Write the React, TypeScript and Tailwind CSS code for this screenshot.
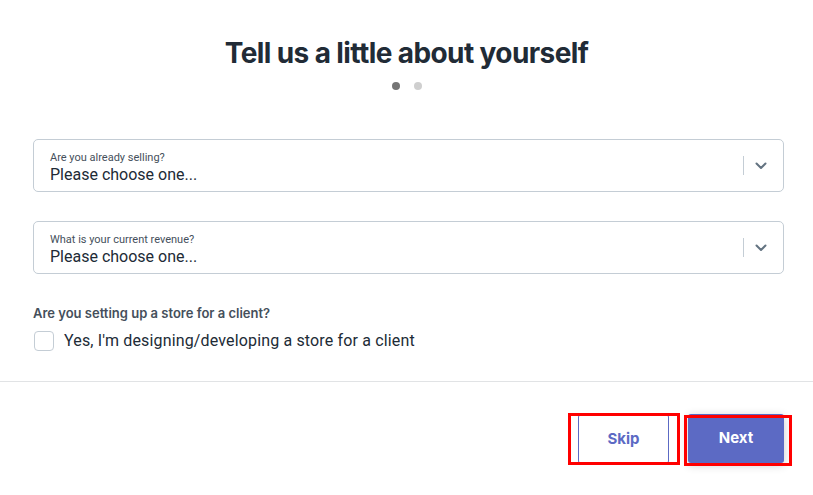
import { useState } from 'react';

const fieldFont = { fontFamily: 'Roboto, "Liberation Sans", sans-serif' };

type SelectFieldProps = {
  label: string;
  placeholder: string;
};

const SelectField = ({ label, placeholder }: SelectFieldProps) => (
  <div className="flex h-[53px] w-full items-center rounded-[5px] border border-[#c4cdd5] bg-white pl-4 pr-4">
    <div className="flex flex-1 flex-col pt-[4px]">
      <span className="text-[11px] leading-[14px] text-[#454f5b]" style={fieldFont}>
        {label}
      </span>
      <span className="text-[16px] leading-[20px] text-[#212b36]" style={fieldFont}>
        {placeholder}
      </span>
    </div>
    <div className="h-[19px] w-px bg-[#c4cdd5]" />
    <div className="flex w-[23px] justify-end">
      <svg width="12" height="8" viewBox="0 0 12 8" fill="none">
        <path d="M1.5 1.5L6 6l4.5-4.5" stroke="#637381" strokeWidth="2" strokeLinecap="round" strokeLinejoin="round" />
      </svg>
    </div>
  </div>
);

export default function App() {
  const [forClient, setForClient] = useState(false);

  return (
    <div className="flex h-[495px] w-[813px] flex-col bg-white" style={{ fontFamily: 'Inter, "Noto Sans", sans-serif' }}>
      {/* Header */}
      <div className="flex flex-col items-center pt-[35px]">
        <h1 className="text-[28px] font-bold leading-[36px] tracking-[-0.6px] text-[#212b36]">
          Tell us a little about yourself
        </h1>
        <div className="mt-[11px] flex gap-[14px]">
          <span className="h-[8px] w-[8px] rounded-full bg-[#757575]" />
          <span className="h-[8px] w-[8px] rounded-full bg-[#cfcfcf]" />
        </div>
      </div>

      {/* Form */}
      <div className="mt-[49px] flex flex-col pl-[33px] pr-[29px]">
        <SelectField label="Are you already selling?" placeholder="Please choose one..." />
        <div className="mt-[29px]">
          <SelectField label="What is your current revenue?" placeholder="Please choose one..." />
        </div>

        <p className="mt-[31px] text-[13px] font-semibold leading-[16px] text-[#454f5b]">
          Are you setting up a store for a client?
        </p>
        <label className="mt-[10px] flex cursor-pointer items-center gap-[10px]">
          <input
            type="checkbox"
            checked={forClient}
            onChange={() => setForClient(!forClient)}
            className="ml-[1px] h-[20px] w-[20px] appearance-none rounded-[4px] border border-[#c4cdd5] bg-white"
          />
          <span className="text-[16px] leading-[20px] tracking-[0.15px] text-[#212b36]" style={fieldFont}>
            Yes, I'm designing/developing a store for a client
          </span>
        </label>
      </div>

      <div className="mt-[30px] h-px w-full bg-[#e1e3e5]" />

      {/* Footer */}
      <div className="flex justify-end gap-[19px] pr-[29px] pt-[32px]">
        <div className="relative">
          <button className="h-[50px] w-[91px] rounded-[3px] border border-[#5c6ac4] bg-white text-[15px] font-bold text-[#5c6ac4]">
            Skip
          </button>
          <div className="pointer-events-none absolute -left-[10px] -right-[11px] -top-[1px] -bottom-[1px] border-[3px] border-[#ff0000]" />
        </div>
        <div className="relative">
          <button className="h-[49px] w-[96px] rounded-[3px] bg-[#5c6ac4] text-[15px] font-bold text-white shadow-[0_2px_10px_rgba(0,0,0,0.2)]">
            Next
          </button>
          <div className="pointer-events-none absolute -left-[4px] -right-[8px] top-[1px] -bottom-[2px] border-[3px] border-[#ff0000]" />
        </div>
      </div>
    </div>
  );
}
